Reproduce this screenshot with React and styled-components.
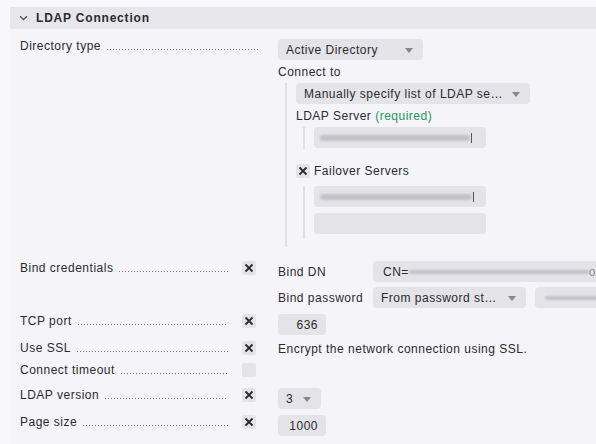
import React from "react";
import styled, { createGlobalStyle } from "styled-components";

const GlobalStyle = createGlobalStyle`
  html, body {
    margin: 0;
    padding: 0;
    background: #f8f8fc;
  }
  body {
    font-family: "Liberation Sans", Arial, sans-serif;
    font-size: 12px;
    color: #2b2b2e;
    letter-spacing: 0.5px;
  }
`;

const Page = styled.div`
  width: 596px;
  height: 444px;
  overflow: hidden;
  padding: 7px 0 0 10px;
  box-sizing: border-box;
`;

const Panel = styled.div`
  width: 640px;
  background: #f4f4f9;
  min-height: 460px;
`;

const Header = styled.div`
  height: 22px;
  background: #e6e6eb;
  display: flex;
  align-items: center;
  gap: 8px;
  padding-left: 9px;
  font-weight: bold;
  letter-spacing: 0.8px;
  color: #2b2b2e;
`;

const Body = styled.div`
  display: grid;
  grid-template-columns: 210px 48px 1fr;
  row-gap: 6px;
  padding: 10px 0 10px 10px;
  align-items: start;
`;

const Label = styled.div`
  grid-column: ${(p) => (p.$wide ? "span 2" : "auto")};
  display: flex;
  align-items: baseline;
  line-height: 14px;
  padding-right: ${(p) => (p.$wide ? "20px" : "2px")};
  white-space: nowrap;
`;

const Dots = styled.span`
  flex: 1;
  margin-left: 6px;
  height: 1px;
  background-image: linear-gradient(to right, #7a7a80 1px, transparent 1px);
  background-size: 3px 1px;
  background-repeat: repeat-x;
`;

const BoxCell = styled.div`
  padding-left: 12px;
`;

const Check = styled.div`
  width: 14px;
  height: 14px;
  background: #e3e3e8;
  border-radius: 2px;
  display: flex;
  align-items: center;
  justify-content: center;
  flex-shrink: 0;
`;

const Content = styled.div`
  display: flex;
  flex-direction: column;
  align-items: flex-start;
  margin-bottom: ${(p) => p.$mb || 0}px;
`;

const Text = styled.div`
  line-height: 16px;
  min-height: ${(p) => p.$h || 16}px;
  margin-top: ${(p) => p.$mt || 0}px;
  white-space: nowrap;
`;

const Required = styled.span`
  color: #23985a;
`;

const Branch = styled.div`
  border-left: 2px solid #e0e0e6;
  margin-left: 7px;
  padding-left: 9px;
  margin-top: ${(p) => p.$mt || 0}px;
  padding-bottom: ${(p) => p.$pb || 0}px;
  display: flex;
  flex-direction: column;
  align-items: flex-start;
  gap: ${(p) => p.$gap || 0}px;
`;

const Field = styled.div`
  height: 21px;
  width: ${(p) => p.$w}px;
  background: #e3e3e8;
  border-radius: 4px;
  box-sizing: border-box;
  display: flex;
  align-items: center;
  justify-content: ${(p) => (p.$right ? "flex-end" : "flex-start")};
  padding: 0 8px 0 ${(p) => (p.$pl != null ? p.$pl : 8)}px;
  overflow: hidden;
  white-space: nowrap;
  flex-shrink: 0;
  margin-top: ${(p) => p.$mt || 0}px;
  color: #2b2b2e;
`;

const SelectBox = styled(Field)`
  justify-content: space-between;
  padding-right: 10px;
`;

const SelectText = styled.span`
  overflow: hidden;
  text-overflow: ellipsis;
  white-space: nowrap;
  margin-right: 8px;
`;

const Arrow = styled.span`
  width: 0;
  height: 0;
  border-left: 4px solid transparent;
  border-right: 4px solid transparent;
  border-top: 5px solid #86868c;
  margin-top: 2px;
  flex-shrink: 0;
`;

const Smudge = styled.span`
  display: inline-block;
  width: ${(p) => p.$w}px;
  height: ${(p) => p.$h || 6}px;
  background: repeating-linear-gradient(
    to right,
    #a9a9b0 0px,
    #c4c4ca 1px,
    #b4b4ba 2px
  );
  border-radius: 3px;
  filter: blur(1px);
  opacity: 0.8;
  flex-shrink: 0;
`;

const Caret = styled.span`
  display: inline-block;
  width: 1px;
  height: 10px;
  background: #555;
  margin-left: 1px;
`;

const CheckRow = styled.div`
  display: flex;
  align-items: center;
  gap: 4px;
  margin-top: ${(p) => p.$mt || 0}px;
  line-height: 16px;
`;

const SubGrid = styled.div`
  display: grid;
  grid-template-columns: 95px auto;
  row-gap: 5px;
  align-items: center;
`;

const SubRow = styled.div`
  display: flex;
  gap: 9px;
`;

const Faint = styled.span`
  color: #8a8a90;
`;

const Chevron = () => (
  <svg width="9" height="6" viewBox="0 0 9 6">
    <path d="M1 1.2 L4.5 4.5 L8 1.2" fill="none" stroke="#55555b" strokeWidth="1.3" />
  </svg>
);

const XMark = () => (
  <svg width="10" height="10" viewBox="0 0 10 10">
    <path d="M1.5 1.5 L8.5 8.5 M8.5 1.5 L1.5 8.5" stroke="#2b2b2e" strokeWidth="1.8" />
  </svg>
);

const Checkbox = ({ checked }) => <Check>{checked && <XMark />}</Check>;

const Select = ({ w, children, mt }) => (
  <SelectBox $w={w} $mt={mt}>
    <SelectText>{children}</SelectText>
    <Arrow />
  </SelectBox>
);

const Row = ({ label, checked, children }) => (
  <>
    <Label>
      {label}
      <Dots />
    </Label>
    <BoxCell>
      <Checkbox checked={checked} />
    </BoxCell>
    <Content>{children}</Content>
  </>
);

export default function App() {
  return (
    <>
      <GlobalStyle />
      <Page>
        <Panel>
          <Header>
            <Chevron />
            LDAP Connection
          </Header>
          <Body>
            <Label $wide>
              Directory type
              <Dots />
            </Label>
            <Content $mb={8}>
              <Select w={145}>Active Directory</Select>
              <Text $mt={4}>Connect to</Text>
              <Branch $mt={3} $pb={8}>
                <Select w={234}>Manually specify list of LDAP servers</Select>
                <Text $mt={4}>
                  LDAP Server <Required>(required)</Required>
                </Text>
                <Branch $mt={3} $pb={1}>
                  <Field $w={172} $pl={6}>
                    <Smudge $w={150} />
                    <Caret />
                  </Field>
                </Branch>
                <CheckRow $mt={14}>
                  <Checkbox checked />
                  Failover Servers
                </CheckRow>
                <Branch $mt={7} $pb={5} $gap={6}>
                  <Field $w={172} $pl={6}>
                    <Smudge $w={152} />
                    <Caret />
                  </Field>
                  <Field $w={172} />
                </Branch>
              </Branch>
            </Content>

            <Row label="Bind credentials" checked>
              <SubGrid>
                <span>Bind DN</span>
                <Field $w={226} $pl={10}>
                  CN=
                  <Smudge $w={180} $h={4} />
                  <Faint>or</Faint>
                </Field>
                <span>Bind password</span>
                <SubRow>
                  <Select w={153}>From password store</Select>
                  <Field $w={70} $pl={10}>
                    <Smudge $w={60} $h={4} />
                  </Field>
                </SubRow>
              </SubGrid>
            </Row>

            <Row label="TCP port" checked>
              <Field $w={48} $right>
                636
              </Field>
            </Row>

            <Row label="Use SSL" checked>
              <Text>Encrypt the network connection using SSL.</Text>
            </Row>

            <Row label="Connect timeout">
              <Text $h={19} />
            </Row>

            <Row label="LDAP version" checked>
              <Select w={43}>3</Select>
            </Row>

            <Row label="Page size" checked>
              <Field $w={48} $right>
                1000
              </Field>
            </Row>
          </Body>
        </Panel>
      </Page>
    </>
  );
}
